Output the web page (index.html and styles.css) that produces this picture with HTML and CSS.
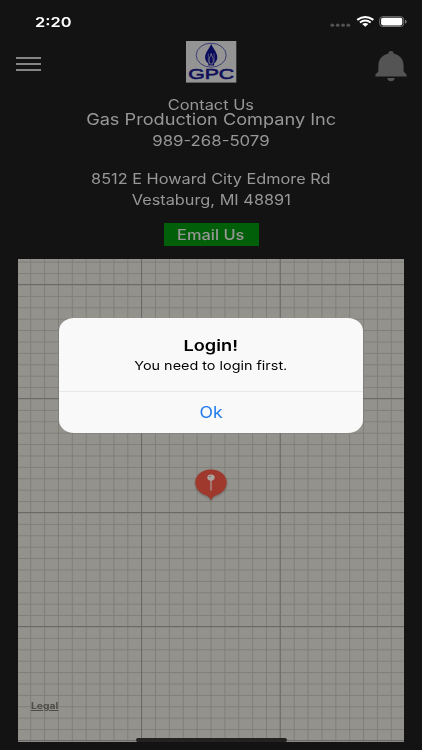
FILE: index.html
```
<!DOCTYPE html>
<html lang="en">
<head>
  <meta charset="utf-8">
  <title>Contact Us</title>
  <link rel="stylesheet" href="styles.css">
</head>
<body>
<div class="screen">
  <div class="status-bar">
    <span class="time wide">2:20</span>
    <svg class="status-icons" width="78" height="14" viewBox="0 0 78 14">
      <g fill="#525252">
        <ellipse cx="3.3" cy="10.2" rx="1.9" ry="1.6"/>
        <ellipse cx="8.7" cy="10.2" rx="1.9" ry="1.6"/>
        <ellipse cx="14" cy="10.2" rx="1.9" ry="1.6"/>
        <ellipse cx="19.3" cy="10.2" rx="1.9" ry="1.6"/>
      </g>
      <g fill="none" stroke="#fff" stroke-width="2">
        <path d="M28.2 4.9Q36.3 -1 44.4 4.9"/>
        <path d="M30.9 7.5Q36.3 3.5 41.7 7.5"/>
      </g>
      <path d="M33.2 9Q36.3 6.9 39.4 9L36.3 11.7Z" fill="#fff"/>
      <rect x="50.7" y="1.7" width="24" height="9.8" rx="3" fill="none" stroke="#777" stroke-width="1"/>
      <rect x="52.1" y="2.8" width="21.2" height="7.6" rx="1.8" fill="#fff"/>
      <path d="M76 4.8Q77.8 5.4 77.8 6.7T76 8.6Z" fill="#777"/>
    </svg>
  </div>

  <div class="header">
    <div class="menu">
      <div class="menu-line"></div>
      <div class="menu-line"></div>
      <div class="menu-line"></div>
    </div>
    <svg class="logo" width="51" height="42" viewBox="0 0 51 42">
      <rect width="50.3" height="41.6" fill="#949494"/>
      <ellipse cx="25.2" cy="14.2" rx="15" ry="12" fill="none" stroke="#26266a" stroke-width=".8"/>
      <path d="M25.2 2.8C26 6 31.5 11.5 31.3 16.5C31.2 19.5 29.5 21.5 28.1 22.5V24.6H22.4V22.5C20.7 21.5 19.2 19.5 19.1 16.5C18.9 11.5 24.5 6 25.2 2.8Z" fill="#0a0a5c"/>
      <path d="M25.2 12.5C25.5 15 27.8 17 27.3 20L26.5 23H23.9L23.1 20C22.6 17 24.9 15 25.2 12.5Z" fill="#0a0a5c" stroke="#949494" stroke-width=".7"/>
      <path d="M22.3 21.5V12.5M28.1 21.5V12.5" stroke="#777790" stroke-width=".6"/>
      <text x="2.2" y="38.2" textLength="46" lengthAdjust="spacingAndGlyphs">GPC</text>
    </svg>
    <svg class="bell" width="32" height="31" viewBox="0 0 32 31">
      <path fill="#545454" d="M16 0C17.7 0 18.7 1.1 18.7 2.7C25 3.8 28.6 8.6 28.6 14.5V19.5C28.6 21.8 31.6 22.5 31.6 24V25.5H.4V24C.4 22.5 3.4 21.8 3.4 19.5V14.5C3.4 8.6 7 3.8 13.3 2.7C13.3 1.1 14.3 0 16 0Z"/>
      <path fill="#545454" d="M12.2 27H19.8Q19 30.2 16 30.2T12.2 27Z"/>
    </svg>
  </div>

  <div class="contact">
    <div class="line heading"><span class="wide">Contact Us</span></div>
    <div class="line company"><span class="wide">Gas Production Company Inc</span></div>
    <div class="line phone"><span class="wide">989-268-5079</span></div>
    <div class="line street"><span class="wide">8512 E Howard City Edmore Rd</span></div>
    <div class="line city"><span class="wide">Vestaburg, MI 48891</span></div>
    <div class="email-button"><span class="wide">Email Us</span></div>
  </div>

  <div class="map">
    <svg class="grid" width="386" height="483">
      <defs>
        <pattern id="minor" x="12.2" y="25.5" width="13.87" height="11.4" patternUnits="userSpaceOnUse">
          <path d="M.5 0V11.4M0 .5H13.87" stroke="#7f7e79" stroke-width="1"/>
        </pattern>
        <pattern id="major" x="123" y="25" width="138.7" height="114" patternUnits="userSpaceOnUse">
          <path d="M.5 0V114M0 .5H138.7" stroke="#6b6a66" stroke-width="1"/>
        </pattern>
      </defs>
      <rect width="386" height="483" fill="url(#minor)"/>
      <rect width="386" height="483" fill="url(#major)"/>
    </svg>
    <svg class="pin" width="36" height="36" viewBox="0 0 36 36">
      <path d="M18 2.6C27 2.6 33.7 8.5 33.7 15.5C33.7 22.5 28 26.5 22.5 28.6C20.5 29.6 19.2 31 18 33.2C16.8 31 15.5 29.6 13.5 28.6C8 26.5 2.3 22.5 2.3 15.5C2.3 8.5 9 2.6 18 2.6Z" fill="#9f382d"/>
      <path d="M18 13V23.5" stroke="#aaa09d" stroke-width="1.2"/>
      <ellipse cx="18" cy="10.6" rx="3.7" ry="3.1" fill="#aaa3a0"/>
      <ellipse cx="16.9" cy="9.6" rx="1" ry=".7" fill="#7a6561"/>
    </svg>
    <span class="legal wide">Legal</span>
  </div>

  <div class="home-indicator"></div>

  <div class="alert">
    <div class="alert-body">
      <div class="alert-title"><span class="wide">Login!</span></div>
      <div class="alert-text"><span class="wide">You need to login first.</span></div>
    </div>
    <div class="alert-action"><span class="wide">Ok</span></div>
  </div>
</div>
</body>
</html>
```
FILE: styles.css
```
body {
  margin: 0;
  background-color: #131313;
  font-family: Inter, Arial, sans-serif;
}

.screen {
  position: relative;
  width: 422px;
  height: 750px;
  overflow: hidden;
  background-color: #131313;
  color: #979797;
}

/* extended letterforms */
.wide {
  display: inline-block;
  white-space: nowrap;
  transform: scaleX(1.2);
}

.status-bar {
  display: flex;
  justify-content: space-between;
  height: 40px;
  padding: 0 15px 0 35px;
  box-sizing: border-box;
}

.time {
  margin-top: 13px;
  font-size: 13.7px;
  line-height: 18px;
  font-weight: 600;
  color: #fff;
  transform-origin: left;
}

.status-icons {
  margin-top: 15px;
}

.header {
  display: flex;
  justify-content: space-between;
  height: 56px;
  padding: 0 15px 0 16px;
}

.menu {
  display: flex;
  flex-direction: column;
  gap: 4px;
  width: 60px;
  padding-top: 17px;
}

.menu-line {
  width: 25px;
  height: 2px;
  background-color: #858585;
}

.logo {
  margin: 1px 0 0 -1px;
}

.logo text {
  font-family: "Liberation Sans", Arial, sans-serif;
  font-size: 15px;
  font-weight: normal;
  fill: #10105a;
  stroke: #10105a;
  stroke-width: 0.6px;
}

.bell {
  margin: 11px 0 0 28px;
}

.contact {
  height: 163px;
  text-align: center;
  font-size: 14px;
}

.line {
  height: 20px;
  line-height: 20px;
}

.heading {
  height: 13px;
  line-height: 18px;
}

.heading .wide {
  transform: scaleX(1.17);
}

.company {
  font-size: 16px;
}

.company .wide {
  transform: scaleX(1.135);
}

.phone {
  padding-top: 2px;
}

.street {
  padding-top: 18px;
}

.street .wide,
.city .wide {
  transform: scaleX(1.165);
}

.city {
  padding-top: 1px;
}

.email-button {
  width: 95px;
  height: 23px;
  margin: 13px auto 0;
  line-height: 23px;
  font-weight: 500;
  background-color: #005f08;
}

.email-button .wide {
  transform: scaleX(1.17);
}

.map {
  position: relative;
  width: 386px;
  height: 483px;
  margin-left: 18px;
  background-color: #94928c;
}

.grid {
  display: block;
}

.pin {
  position: absolute;
  left: 175px;
  top: 208px;
  filter: drop-shadow(0 1px 1px rgba(0, 0, 0, 0.3));
}

.legal {
  position: absolute;
  left: 13px;
  bottom: 29px;
  font-size: 8.6px;
  line-height: 14px;
  font-weight: 700;
  color: #4d4c49;
  text-decoration: underline;
  transform-origin: left;
}

.home-indicator {
  position: absolute;
  left: 136px;
  top: 738px;
  width: 151px;
  height: 4px;
  border-radius: 3px;
  background-color: #232221;
}

.alert {
  position: absolute;
  left: 59px;
  top: 318px;
  width: 304px;
  height: 115px;
  border-radius: 15px / 13px;
  background-color: #f9f9f9;
  text-align: center;
  color: #000;
}

.alert-body {
  height: 74px;
  padding-top: 18px;
  box-sizing: border-box;
  border-bottom: 1px solid #e6e9ea;
}

.alert-title {
  font-size: 15.2px;
  line-height: 20px;
  font-weight: 600;
}

.alert-text {
  font-size: 12px;
  line-height: 19px;
}

.alert-action {
  font-size: 15.5px;
  line-height: 41px;
  color: #207ceb;
}

.alert-action .wide {
  transform: scaleX(1.14);
}
```
